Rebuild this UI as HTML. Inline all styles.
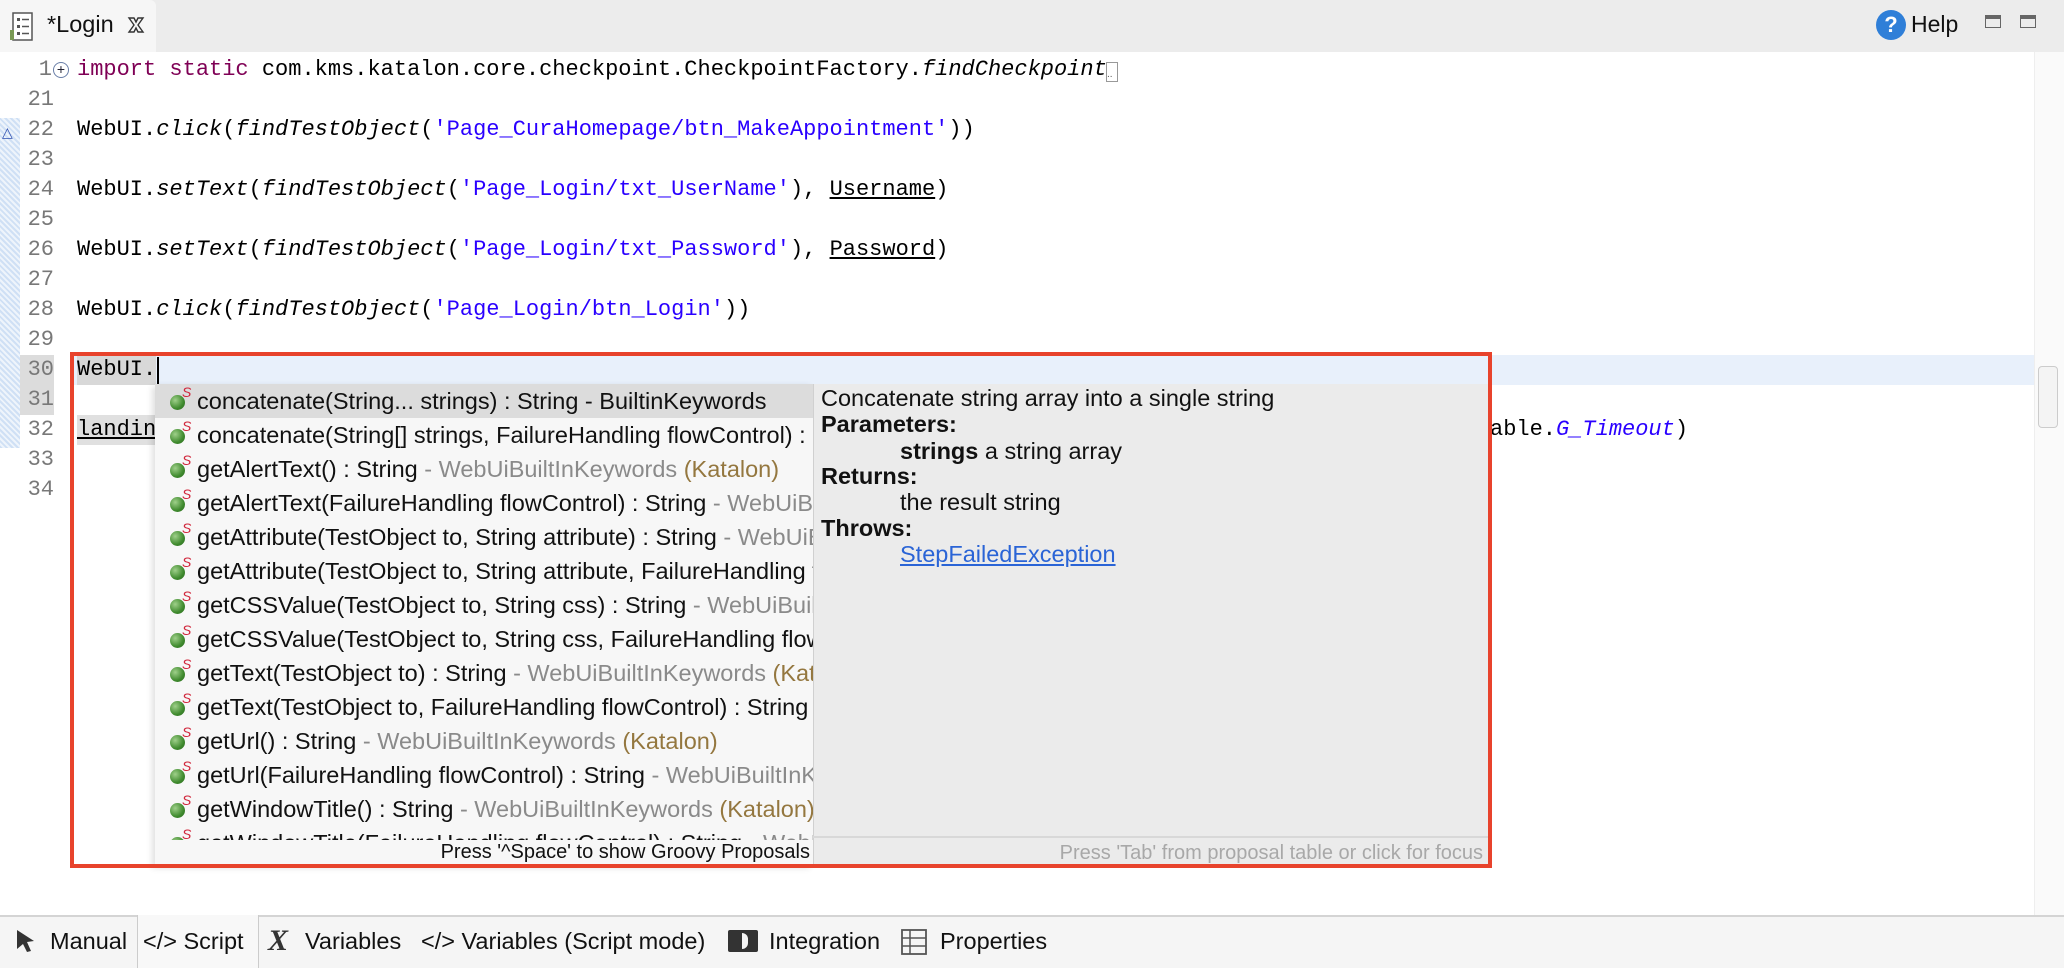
<!DOCTYPE html>
<html><head><meta charset="utf-8"><style>
*{margin:0;padding:0;box-sizing:border-box}
body{width:2064px;height:968px;overflow:hidden;background:#fff;font-family:"Liberation Sans",sans-serif;position:relative}
.abs{position:absolute}
.code{font-family:"Liberation Mono",monospace;font-size:22px;line-height:30px;white-space:pre;color:#000}
.ln{position:absolute;left:0;width:54px;text-align:right;font-family:"Liberation Mono",monospace;font-size:22px;line-height:30px;color:#787878}
.kw{color:#7f0055}
.st{color:#2a00ff}
.it{font-style:italic}
.ul{text-decoration:underline}
.item{position:absolute;left:0;width:658px;height:34px;font-size:23.5px;line-height:34px;white-space:nowrap;overflow:hidden;padding-left:42px;color:#111}
.item .ic{position:absolute;left:15px;top:11px;width:15px;height:15px;border-radius:50%;background:radial-gradient(circle at 35% 35%,#9fd08a,#3f8a2e 60%,#2c6a20)}
.item .s{position:absolute;left:27px;top:-9px;color:#d0253a;font-size:14px}
.g{color:#8a8a8a}.k{color:#94773f}
.doc{position:absolute;left:821px;font-size:23.5px;color:#111;white-space:nowrap}
.bt{position:absolute;top:916px;height:52px;line-height:50px;font-size:23.5px;color:#111;white-space:nowrap}
</style></head><body>
<!-- top tab bar -->
<div class="abs" style="left:0;top:0;width:2064px;height:52px;background:#ececec"></div>
<div class="abs" style="left:0;top:0;width:156px;height:52px;background:#f6f6f6;border-radius:0 6px 0 0"></div>
<svg class="abs" style="left:9px;top:12px" width="26" height="30" viewBox="0 0 26 30"><rect x="4" y="1" width="19" height="27" fill="#fff" stroke="#555" stroke-width="1.5"/><rect x="8" y="6" width="3" height="3" fill="#555"/><rect x="8" y="13" width="3" height="3" fill="#555"/><rect x="8" y="20" width="3" height="3" fill="#555"/><line x1="13" y1="7.5" x2="20" y2="7.5" stroke="#555" stroke-width="1.5"/><line x1="13" y1="14.5" x2="20" y2="14.5" stroke="#555" stroke-width="1.5"/><line x1="13" y1="21.5" x2="20" y2="21.5" stroke="#555" stroke-width="1.5"/><rect x="1" y="18" width="4" height="10" fill="#7a9a55"/></svg>
<div class="abs" style="left:47px;top:11px;font-size:23.5px;color:#111">*Login</div>
<svg class="abs" style="left:126px;top:15px" width="20" height="20" viewBox="0 0 20 20"><path d="M3 3 L8 3 L10 7 L12 3 L17 3 L12 10 L17 17 L12 17 L10 13 L8 17 L3 17 L8 10 Z" fill="none" stroke="#333" stroke-width="1.4"/></svg>
<div class="abs" style="left:1876px;top:10px;width:30px;height:30px;border-radius:50%;background:#2f7fd8;color:#fff;font-weight:bold;font-size:22px;text-align:center;line-height:30px">?</div>
<div class="abs" style="left:1911px;top:11px;font-size:23px;color:#111">Help</div>
<div class="abs" style="left:1985px;top:15px;width:16px;height:13px;border:1.5px solid #666;border-top-width:4px"></div>
<div class="abs" style="left:2020px;top:15px;width:16px;height:13px;border:1.5px solid #666;border-top-width:4px"></div>

<!-- gutter change ruler -->
<div class="abs" style="left:0;top:118px;width:20px;height:330px;background:repeating-linear-gradient(45deg,#cfe0f5 0 2px,#eef4fb 2px 4px)"></div>
<div class="abs" style="left:2px;top:124px;font-size:14px;color:#3050b0">△</div>

<!-- current line highlight -->
<div class="abs" style="left:72px;top:355px;width:1962px;height:30px;background:#e8f0fb"></div>
<div class="abs" style="left:20px;top:355px;width:34px;height:30px;background:#dcdcdc"></div>
<div class="abs" style="left:20px;top:385px;width:34px;height:30px;background:#dcdcdc"></div>

<!-- line numbers -->
<div class="ln" style="top:55px;width:52px">1</div>
<div class="abs" style="left:53px;top:62px;width:16px;height:16px;border:1.5px solid #6a7fa8;border-radius:50%;font-size:14px;line-height:13px;text-align:center;color:#223">+</div>
<div class="ln" style="top:85px">21</div>
<div class="ln" style="top:115px">22</div>
<div class="ln" style="top:145px">23</div>
<div class="ln" style="top:175px">24</div>
<div class="ln" style="top:205px">25</div>
<div class="ln" style="top:235px">26</div>
<div class="ln" style="top:265px">27</div>
<div class="ln" style="top:295px">28</div>
<div class="ln" style="top:325px">29</div>
<div class="ln" style="top:355px">30</div>
<div class="ln" style="top:385px">31</div>
<div class="ln" style="top:415px">32</div>
<div class="ln" style="top:445px">33</div>
<div class="ln" style="top:475px">34</div>

<!-- code -->
<div class="abs code" style="left:77px;top:55px"><span class="kw">import</span> <span class="kw">static</span> com.kms.katalon.core.checkpoint.CheckpointFactory.<span class="it">findCheckpoint</span></div>
<div class="abs" style="left:1106px;top:62px;width:12px;height:20px;border:1px solid #999;font-size:10px;line-height:24px;color:#555">..</div>
<div class="abs code" style="left:77px;top:115px">WebUI.<span class="it">click</span>(<span class="it">findTestObject</span>(<span class="st">'Page_CuraHomepage/btn_MakeAppointment'</span>))</div>
<div class="abs code" style="left:77px;top:175px">WebUI.<span class="it">setText</span>(<span class="it">findTestObject</span>(<span class="st">'Page_Login/txt_UserName'</span>), <span class="ul">Username</span>)</div>
<div class="abs code" style="left:77px;top:235px">WebUI.<span class="it">setText</span>(<span class="it">findTestObject</span>(<span class="st">'Page_Login/txt_Password'</span>), <span class="ul">Password</span>)</div>
<div class="abs code" style="left:77px;top:295px">WebUI.<span class="it">click</span>(<span class="it">findTestObject</span>(<span class="st">'Page_Login/btn_Login'</span>))</div>
<div class="abs code" style="left:77px;top:355px;background:#d8d8d8">WebUI.</div>
<div class="abs" style="left:157px;top:357px;width:2px;height:27px;background:#000"></div>
<div class="abs code" style="left:77px;top:415px;background:#e0e0e0"><span class="ul">landin</span></div>
<div class="abs code" style="left:1490px;top:415px">able.<span class="st it">G_Timeout</span>)</div>

<!-- scrollbar -->
<div class="abs" style="left:2034px;top:52px;width:30px;height:864px;background:#fafafa;border-left:1px solid #eee"></div>
<div class="abs" style="left:2038px;top:366px;width:20px;height:62px;border:1px solid #ccc;border-radius:4px;background:#f4f4f4"></div>

<!-- popup list -->
<div class="abs" style="left:155px;top:384px;width:658px;height:482px;background:#f7f7f7;box-shadow:-3px 2px 6px rgba(0,0,0,.12)"></div>
<div class="abs" style="left:155px;top:384px;width:658px;height:456px;overflow:hidden">
<div class="item" style="top:0;background:#dcdcdc"><i class="ic"></i><i class="s">S</i>concatenate(String... strings) : String - BuiltinKeywords</div>
<div class="item" style="top:34px"><i class="ic"></i><i class="s">S</i>concatenate(String[] strings, FailureHandling flowControl) : String</div>
<div class="item" style="top:68px"><i class="ic"></i><i class="s">S</i>getAlertText() : String <span class="g">- WebUiBuiltInKeywords</span> <span class="k">(Katalon)</span></div>
<div class="item" style="top:102px"><i class="ic"></i><i class="s">S</i>getAlertText(FailureHandling flowControl) : String <span class="g">- WebUiBuiltInKeywords</span></div>
<div class="item" style="top:136px"><i class="ic"></i><i class="s">S</i>getAttribute(TestObject to, String attribute) : String <span class="g">- WebUiBuiltInKeywords</span></div>
<div class="item" style="top:170px"><i class="ic"></i><i class="s">S</i>getAttribute(TestObject to, String attribute, FailureHandling flowControl)</div>
<div class="item" style="top:204px"><i class="ic"></i><i class="s">S</i>getCSSValue(TestObject to, String css) : String <span class="g">- WebUiBuiltInKeywords</span></div>
<div class="item" style="top:238px"><i class="ic"></i><i class="s">S</i>getCSSValue(TestObject to, String css, FailureHandling flowControl)</div>
<div class="item" style="top:272px"><i class="ic"></i><i class="s">S</i>getText(TestObject to) : String <span class="g">- WebUiBuiltInKeywords</span> <span class="k">(Katalon)</span></div>
<div class="item" style="top:306px"><i class="ic"></i><i class="s">S</i>getText(TestObject to, FailureHandling flowControl) : String</div>
<div class="item" style="top:340px"><i class="ic"></i><i class="s">S</i>getUrl() : String <span class="g">- WebUiBuiltInKeywords</span> <span class="k">(Katalon)</span></div>
<div class="item" style="top:374px"><i class="ic"></i><i class="s">S</i>getUrl(FailureHandling flowControl) : String <span class="g">- WebUiBuiltInKeywords</span></div>
<div class="item" style="top:408px"><i class="ic"></i><i class="s">S</i>getWindowTitle() : String <span class="g">- WebUiBuiltInKeywords</span> <span class="k">(Katalon)</span></div>
<div class="item" style="top:442px"><i class="ic"></i><i class="s">S</i>getWindowTitle(FailureHandling flowControl) : String <span class="g">- WebUi</span></div>
</div>
<div class="abs" style="left:155px;top:841px;width:655px;text-align:right;font-size:20px;color:#111">Press '^Space' to show Groovy Proposals</div>

<!-- doc pane -->
<div class="abs" style="left:813px;top:384px;width:676px;height:482px;background:#ebebeb;border-left:1px solid #d0d0d0"></div>
<div class="abs" style="left:813px;top:836px;width:676px;height:2px;background:#d8d8d8"></div>
<div class="doc" style="top:385px">Concatenate string array into a single string</div>
<div class="doc" style="top:411px;font-weight:bold">Parameters:</div>
<div class="doc" style="top:438px;left:900px"><b>strings</b> a string array</div>
<div class="doc" style="top:463px;font-weight:bold">Returns:</div>
<div class="doc" style="top:489px;left:900px">the result string</div>
<div class="doc" style="top:515px;font-weight:bold">Throws:</div>
<div class="doc" style="top:541px;left:900px;color:#2a64d6;text-decoration:underline">StepFailedException</div>
<div class="abs" style="left:813px;top:842px;width:670px;text-align:right;font-size:20px;color:#a8a8a8">Press 'Tab' from proposal table or click for focus</div>

<!-- red highlight rectangle -->
<div class="abs" style="left:70px;top:352px;width:1422px;height:516px;border:4px solid #e8432c"></div>

<!-- bottom tabs -->
<div class="abs" style="left:0;top:915px;width:2064px;height:53px;background:#f5f5f5;border-top:2px solid #d4d4d4"></div>
<div class="abs" style="left:137px;top:915px;width:122px;height:53px;background:#f8f8f8;border-left:1px solid #ccc;border-right:1px solid #ccc"></div>
<svg class="abs" style="left:14px;top:928px" width="24" height="26" viewBox="0 0 24 26"><path d="M3 2 L20 13 L13 14 L17 23 L13 24 L9 16 L3 21 Z" fill="#333"/></svg>
<div class="bt" style="left:50px">Manual</div>
<div class="bt" style="left:143px">&lt;/&gt; Script</div>
<div class="bt" style="left:268px;font-family:'Liberation Serif',serif;font-style:italic;font-weight:bold;font-size:30px;color:#333">X</div>
<div class="bt" style="left:305px">Variables</div>
<div class="bt" style="left:421px">&lt;/&gt; Variables (Script mode)</div>
<div class="abs" style="left:728px;top:930px;width:30px;height:22px;background:#333;border-radius:2px"></div>
<div class="abs" style="left:742px;top:933px;width:6px;height:16px;background:#f5f5f5;border-radius:0 6px 6px 0"></div>
<div class="bt" style="left:769px">Integration</div>
<svg class="abs" style="left:900px;top:928px" width="28" height="28" viewBox="0 0 28 28"><rect x="2" y="2" width="24" height="24" fill="none" stroke="#555" stroke-width="1.8"/><line x1="2" y1="10" x2="26" y2="10" stroke="#555" stroke-width="1.5"/><line x1="2" y1="18" x2="26" y2="18" stroke="#555" stroke-width="1.5"/><line x1="10" y1="2" x2="10" y2="26" stroke="#555" stroke-width="1.5"/></svg>
<div class="bt" style="left:940px">Properties</div>
</body></html>
